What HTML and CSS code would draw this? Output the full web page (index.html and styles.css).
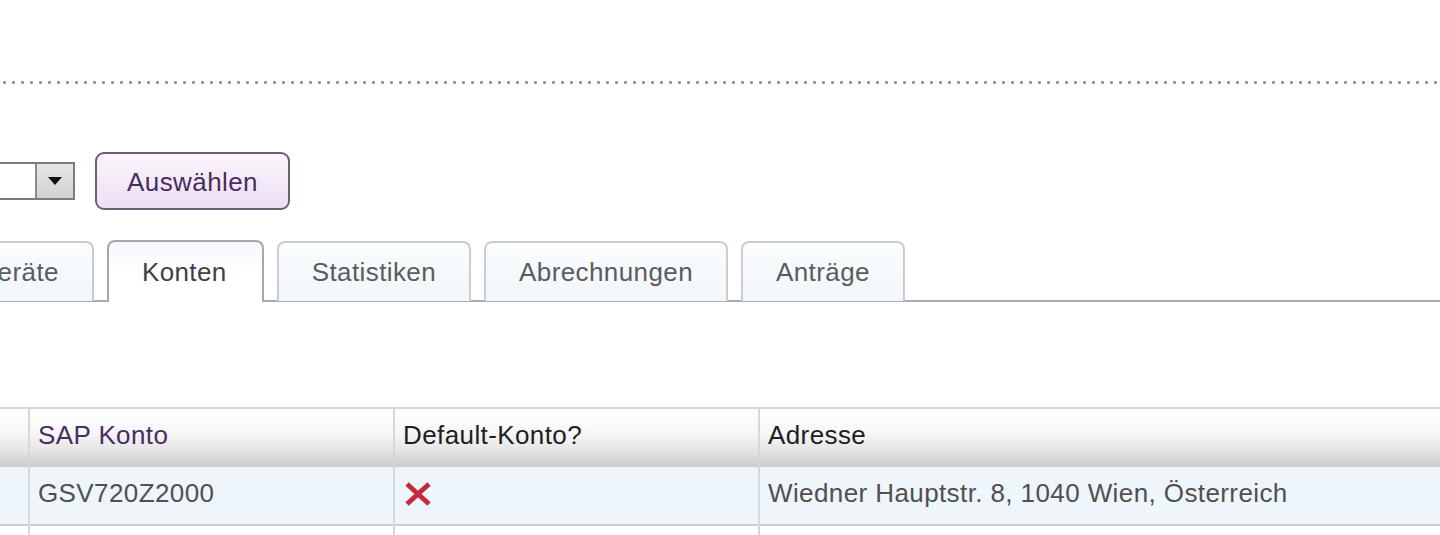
FILE: index.html
```html
<!DOCTYPE html>
<html lang="de">
<head>
<meta charset="utf-8">
<title>Konten</title>
<link rel="stylesheet" href="styles.css">
</head>
<body>
<div class="page">
  <div class="rule"></div>

  <div class="toolbar">
    <div class="select">
      <span class="select-field"></span>
      <span class="select-arrow"><svg width="14" height="8" viewBox="0 0 14 8"><path d="M0 0H14L7 8Z" fill="#111"/></svg></span>
    </div>
    <button class="btn" type="button">Auswählen</button>
  </div>

  <div class="tabs">
    <div class="tab tab-first">Geräte</div>
    <div class="tab active">Konten</div>
    <div class="tab">Statistiken</div>
    <div class="tab">Abrechnungen</div>
    <div class="tab">Anträge</div>
  </div>

  <table class="grid">
    <colgroup>
      <col class="c0"><col class="c1"><col class="c2"><col class="c3">
    </colgroup>
    <thead>
      <tr>
        <th></th>
        <th class="sortable">SAP Konto</th>
        <th>Default-Konto?</th>
        <th>Adresse</th>
      </tr>
    </thead>
    <tbody>
      <tr class="odd">
        <td></td>
        <td>GSV720Z2000</td>
        <td><svg class="xicon" width="28" height="26" viewBox="0 0 28 26"><path d="M3 3L25 23M25 3L3 23" stroke="#c42a3c" stroke-width="5" stroke-linecap="butt"/></svg></td>
        <td>Wiedner Hauptstr. 8, 1040 Wien, Österreich</td>
      </tr>
      <tr class="even">
        <td></td><td></td><td></td><td></td>
      </tr>
    </tbody>
  </table>
</div>
</body>
</html>
```

FILE: styles.css
```css
html, body {
  margin: 0;
  padding: 0;
  background: #fff;
  overflow: hidden;
}

.page {
  width: 1440px;
  height: 535px;
  overflow: hidden;
  font-family: "Liberation Sans", Arial, sans-serif;
  font-size: 26px;
  letter-spacing: 0.4px;
  color: #505050;
}

.rule {
  margin-top: 81px;
  height: 3px;
  background-image: radial-gradient(circle at 1.5px 1.5px, #8a8a8a 1.2px, transparent 1.7px);
  background-size: 9px 3px;
  background-repeat: repeat-x;
  background-position: 3px 0;
}

.toolbar {
  display: flex;
  align-items: center;
  gap: 20px;
  margin-top: 68px;
  height: 58px;
}

.select {
  display: flex;
  margin-left: -45px;
  width: 120px;
  height: 38px;
  box-sizing: border-box;
  border: 2px solid #7c7c7c;
  background: #fff;
}

.select-field {
  flex: 1;
  border-right: 2px solid #8a8a8a;
}

.select-arrow {
  width: 36px;
  display: flex;
  align-items: center;
  justify-content: center;
  background: linear-gradient(#e6e6e6, #d2d2d2);
}

.btn {
  width: 195px;
  height: 58px;
  box-sizing: border-box;
  border: 2px solid #6e5d74;
  border-radius: 9px;
  background: linear-gradient(#fbf4fa, #ecdff5);
  font-family: inherit;
  font-size: 26px;
  letter-spacing: 0.4px;
  color: #4a2c5e;
  padding: 2px 0 0;
}

.tabs {
  display: flex;
  align-items: flex-end;
  gap: 13px;
  margin-top: 30px;
  height: 60px;
  border-bottom: 2px solid #a9adb2;
}

.tab {
  height: 60px;
  box-sizing: border-box;
  padding: 0 33px;
  display: flex;
  align-items: center;
  border: 2px solid #c9cdd3;
  border-bottom: none;
  border-radius: 8px 8px 0 0;
  background: linear-gradient(#fbfdfe, #f1f6fa);
  color: #5c5c5c;
  margin-bottom: -1px;
}

.tab-first {
  margin-left: -58px;
}

.tab.active {
  height: 62px;
  margin-bottom: -2px;
  border-color: #a6a6ae;
  background: linear-gradient(#f9f4fb, #ffffff 45%);
  color: #3e3e48;
  padding: 0 35px 0 33px;
}

.grid {
  margin-top: 105px;
  margin-left: -100px;
  border-collapse: collapse;
  table-layout: fixed;
  width: 1700px;
}

.c0 { width: 128px; }
.c1 { width: 365px; }
.c2 { width: 365px; }
.c3 { width: 842px; }

.grid th,
.grid td {
  text-align: left;
  padding: 0 0 4px 8px;
  border-left: 2px solid #d6d8da;
  font-weight: normal;
  white-space: nowrap;
}

.grid th {
  color: #1e1e1e;
  padding-bottom: 6px;
  background: linear-gradient(#ffffff 0%, #f7f7f7 40%, #e6e6e6 70%, #cbcbcb 100%);
}

.grid thead tr {
  height: 59px;
  border-top: 2px solid #d4d6d8;
}

.grid th.sortable {
  color: #4a2c62;
}

.grid tbody tr.odd {
  height: 58px;
  background: #eef5fb;
  border-bottom: 2px solid #c9cdd2;
}

.grid tbody tr.even {
  height: 40px;
  background: #fff;
}

.xicon {
  display: block;
  margin-left: 1px;
}
```
